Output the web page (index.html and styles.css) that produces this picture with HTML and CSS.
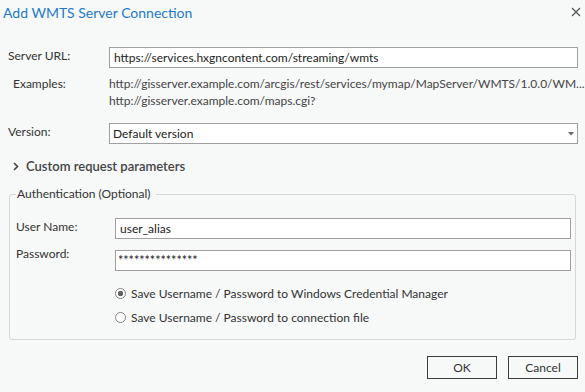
FILE: index.html
```html
<!DOCTYPE html>
<html lang="en">
<head>
	<meta charset="UTF-8">
	<link rel="stylesheet" href="styles.css">
	<title>Add WMTS Server Connection</title>
</head>
<body>

<div class="dialog">
	<header class="titlebar">
		<h1 class="title">Add WMTS Server Connection</h1>
		<button class="close" type="button" aria-label="Close">
			<svg width="10" height="10" viewBox="0 0 10 10"><path d="M1 1 L9 9 M9 1 L1 9" stroke="#555" stroke-width="1.2" fill="none"/></svg>
		</button>
	</header>

	<main class="content">
		<div class="row">
			<label class="label" for="server_url">Server URL:</label>
			<input class="field" id="server_url" type="text" value="https://services.hxgncontent.com/streaming/wmts">
		</div>

		<div class="row examples">
			<span class="label label-indent">Examples:</span>
			<div class="example_list">
				<div class="example">http://gisserver.example.com/arcgis/rest/services/mymap/MapServer/WMTS/1.0.0/WM...</div>
				<div class="example">http://gisserver.example.com/maps.cgi?</div>
			</div>
		</div>

		<div class="row version">
			<label class="label">Version:</label>
			<div class="select">
				<span>Default version</span>
				<svg width="6" height="4" viewBox="0 0 6 4"><path d="M0 0 H6 L3 3.5 Z" fill="#666"/></svg>
			</div>
		</div>

		<div class="expander">
			<svg class="chevron" width="6" height="9" viewBox="0 0 6 9"><path d="M1 1 L4.5 4.5 L1 8" stroke="#444" stroke-width="1.6" fill="none"/></svg>
			<span>Custom request parameters</span>
		</div>

		<fieldset class="group">
			<legend class="group_title">Authentication (Optional)</legend>

			<div class="row row-auth first">
				<label class="label" for="user_name">User Name:</label>
				<input class="field" id="user_name" type="text" value="user_alias">
			</div>

			<div class="row row-auth pw">
				<label class="label label-high" for="password">Password:</label>
				<input class="field field-pw" id="password" type="text" value="***************">
			</div>

			<div class="radios">
				<label class="radio_item"><input type="radio" name="save" checked><span>Save Username / Password to Windows Credential Manager</span></label>
				<label class="radio_item"><input type="radio" name="save"><span>Save Username / Password to connection file</span></label>
			</div>
		</fieldset>
	</main>

	<footer class="buttons">
		<button class="btn" type="button">OK</button>
		<button class="btn" type="button">Cancel</button>
	</footer>
</div><!-- end of dialog -->

</body>
</html>
```

FILE: styles.css
```css
html, body {
	margin: 0;
	background-color: rgb(247, 248, 248);
}

.dialog {
	width: 585px;
	height: 392px;
	font-family: Lato, "Noto Sans", sans-serif;
	font-size: 12px;
	color: rgb(51, 51, 51);
}

.titlebar {
	height: 26px;
	display: flex;
	align-items: center;
	justify-content: space-between;
	padding: 0 4px 2px 3px;
	box-sizing: border-box;
}
	.title {
		margin: 0;
		font-size: 14px;
		font-weight: normal;
		color: rgb(30, 122, 201);
	}

.close {
	border: 0;
	background: none;
	padding: 0;
	width: 10px;
	height: 10px;
	display: flex;
}

.content {
	padding: 21px 7px 0 8px;
}

.row {
	display: grid;
	grid-template-columns: 101px 1fr;
	align-items: start;
}

.label {
	line-height: 16px;
	margin-top: 1px;
}
	.label-indent {
		padding-left: 5px;
	}
	.label-high {
		margin-top: -4px;
	}

.field {
	height: 21px;
	box-sizing: border-box;
	border: 1px solid rgb(160, 160, 160);
	background-color: #fff;
	font-family: inherit;
	font-size: 12px;
	color: rgb(34, 34, 34);
	padding: 0 4px;
	margin: 0;
	outline: none;
}
	.field-pw {
		font-size: 12.5px;
		padding-left: 2px;
	}

.examples {
	margin-top: 7px;
	line-height: 17px;
}
	.examples .label {
		margin-top: 0;
		line-height: 17px;
	}

.example_list {
	color: rgb(68, 68, 68);
}

.example {
	white-space: nowrap;
}

.version {
	margin-top: 14px;
}

.select {
	height: 21px;
	box-sizing: border-box;
	border: 1px solid rgb(160, 160, 160);
	background-color: #fff;
	display: flex;
	align-items: center;
	justify-content: space-between;
	padding: 0 3px 0 3px;
	color: rgb(34, 34, 34);
}

.expander {
	margin-top: 13px;
	height: 18px;
	display: flex;
	align-items: center;
	gap: 7px;
	padding-left: 5px;
	font-size: 13px;
	font-weight: 600;
	color: rgb(68, 68, 68);
}

.group {
	margin: 11px 2px 0 1px;
	padding: 0 4px 10px 6px;
	border: 1px solid rgb(214, 214, 214);
	border-radius: 3px;
}
	.group_title {
		padding: 0 5px 0 1px;
		line-height: 16px;
		font-size: 12px;
	}

.row-auth {
	grid-template-columns: 99px 1fr;
}
	.row-auth.first {
		margin-top: 16px;
	}
	.row-auth.pw {
		margin-top: 11px;
	}

.radios {
	margin-top: 10px;
	padding-left: 99px;
}

.radio_item {
	height: 24px;
	display: flex;
	align-items: center;
	gap: 5px;
}
	.radio_item input {
		appearance: none;
		margin: 0;
		width: 11px;
		height: 11px;
		border: 1px solid rgb(130, 130, 130);
		border-radius: 50%;
		background-color: #fff;
	}
	.radio_item input:checked {
		background: radial-gradient(circle, rgb(100, 100, 100) 0 2.5px, #fff 3px);
	}

.buttons {
	display: flex;
	justify-content: flex-end;
	gap: 11px;
	padding: 16px 7px 0 0;
}

.btn {
	width: 70px;
	height: 23px;
	border: 1px solid rgb(60, 60, 60);
	background-color: rgb(247, 248, 248);
	font-family: inherit;
	font-size: 12px;
	color: rgb(51, 51, 51);
	padding: 0;
}
```
